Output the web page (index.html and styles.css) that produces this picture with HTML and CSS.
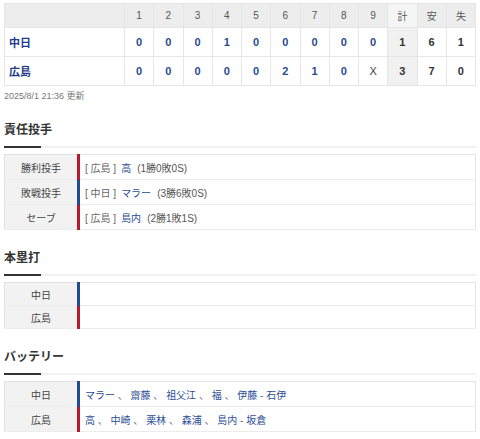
FILE: index.html
```html
<!DOCTYPE html>
<html lang="ja">
<head>
<meta charset="utf-8">
<title>試合結果</title>
<link rel="stylesheet" href="styles.css">
</head>
<body>
<table class="score">
  <colgroup>
    <col class="c-team">
    <col span="12">
  </colgroup>
  <thead>
    <tr>
      <th></th>
      <th>1</th><th>2</th><th>3</th><th>4</th><th>5</th><th>6</th><th>7</th><th>8</th><th>9</th>
      <th class="tot-h">計</th><th>安</th><th>失</th>
    </tr>
  </thead>
  <tbody>
    <tr>
      <td class="team">中日</td>
      <td>0</td><td>0</td><td>0</td><td>1</td><td>0</td><td>0</td><td>0</td><td>0</td><td>0</td>
      <td class="tot">1</td><td class="sum">6</td><td class="sum">1</td>
    </tr>
    <tr>
      <td class="team">広島</td>
      <td>0</td><td>0</td><td>0</td><td>0</td><td>0</td><td>2</td><td>1</td><td>0</td><td class="x">X</td>
      <td class="tot">3</td><td class="sum">7</td><td class="sum">0</td>
    </tr>
  </tbody>
</table>
<p class="stamp">2025/8/1 21:36 更新</p>

<section class="sec">
  <h3 class="sec-title">責任投手</h3>
  <div class="rule"><span class="rule-dark"></span><span class="rule-light"></span></div>
  <table class="info">
    <tr>
      <th class="label">勝利投手</th>
      <td class="val carp"><span class="tm">[ 広島 ]</span><span class="nm">高</span><span class="rec">(1勝0敗0S)</span></td>
    </tr>
    <tr>
      <th class="label">敗戦投手</th>
      <td class="val dra"><span class="tm">[ 中日 ]</span><span class="nm">マラー</span><span class="rec">(3勝6敗0S)</span></td>
    </tr>
    <tr>
      <th class="label">セーブ</th>
      <td class="val carp"><span class="tm">[ 広島 ]</span><span class="nm">島内</span><span class="rec">(2勝1敗1S)</span></td>
    </tr>
  </table>
</section>

<section class="sec">
  <h3 class="sec-title">本塁打</h3>
  <div class="rule"><span class="rule-dark"></span><span class="rule-light"></span></div>
  <table class="info short">
    <tr>
      <th class="label">中日</th>
      <td class="val dra"></td>
    </tr>
    <tr>
      <th class="label">広島</th>
      <td class="val carp"></td>
    </tr>
  </table>
</section>

<section class="sec">
  <h3 class="sec-title">バッテリー</h3>
  <div class="rule"><span class="rule-dark"></span><span class="rule-light"></span></div>
  <table class="info">
    <tr>
      <th class="label">中日</th>
      <td class="val dra bat"><span class="nm">マラー</span> 、 <span class="nm">齋藤</span> 、 <span class="nm">祖父江</span> 、 <span class="nm">福</span> 、 <span class="nm">伊藤</span> - <span class="nm">石伊</span></td>
    </tr>
    <tr>
      <th class="label">広島</th>
      <td class="val carp bat"><span class="nm">高</span> 、 <span class="nm">中崎</span> 、 <span class="nm">栗林</span> 、 <span class="nm">森浦</span> 、 <span class="nm">島内</span> - <span class="nm">坂倉</span></td>
    </tr>
  </table>
</section>
</body>
</html>
```
FILE: styles.css
```css
html, body {
  background: #fff;
}
body {
  margin: 0;
  padding: 3px 4px 0;
  width: 472px;
  font-family: "Liberation Sans", "Noto Sans CJK JP", sans-serif;
  color: #333;
}

.score {
  width: 472px;
  border-collapse: collapse;
  table-layout: fixed;
}
.c-team {
  width: 120px;
}
.score th,
.score td {
  border: 1px solid #e6e6e6;
  text-align: center;
  padding: 0;
}
.score thead tr {
  height: 24px;
}
.score thead th {
  background: #ededed;
  font-weight: normal;
  font-size: 10px;
  color: #555;
}
.score thead th.tot-h {
  background: #f5f5f5;
}
.score tbody tr {
  height: 29px;
}
.score tbody td {
  font-size: 11px;
  font-weight: bold;
  color: #2a4a90;
}
.score td.team {
  text-align: left;
  padding-left: 4px;
  color: #1c3a8a;
  font-size: 11px;
}
.score td.x {
  color: #444;
  font-weight: normal;
}
.score td.tot {
  background: #f1f1f1;
  color: #333;
}
.score td.sum {
  color: #333;
}

.stamp {
  margin: 4px 0 0;
  font-size: 9px;
  line-height: 12px;
  color: #777;
}

.sec {
  margin-top: 19px;
}
.sec-title {
  margin: 0;
  font-size: 12px;
  line-height: 18px;
  font-weight: bold;
  color: #333;
  padding-bottom: 7px;
}
.rule {
  display: flex;
  height: 2px;
}
.rule-dark {
  width: 37px;
  background: #333;
}
.rule-light {
  flex: 1;
  background: #f1f1f1;
}

.info {
  width: 472px;
  margin-top: 6px;
  border-collapse: collapse;
  border: 1px solid #e3e3e3;
}
.info tr {
  height: 25px;
}
.info.short tr {
  height: 23px;
}
.info th,
.info td {
  border-bottom: 1px solid #ececec;
  padding: 0;
}
.info .label {
  width: 72px;
  background: #f2f2f2;
  font-weight: normal;
  font-size: 10px;
  color: #444;
  text-align: center;
}
.info .val {
  border-left: 3px solid #b21a2e;
  padding-left: 5px;
  font-size: 10px;
  color: #666;
  text-align: left;
}
.info .val.dra {
  border-left-color: #1e4c8c;
}
.info .val.carp {
  border-left-color: #b51a2f;
}
.tm {
  color: #666;
}
.nm {
  color: #2a4d96;
  margin: 0 6px 0 5px;
}
.rec {
  color: #555;
}
.bat {
  color: #2a4d96;
  font-size: 9.6px;
}
.bat .nm {
  margin: 0;
}
```
